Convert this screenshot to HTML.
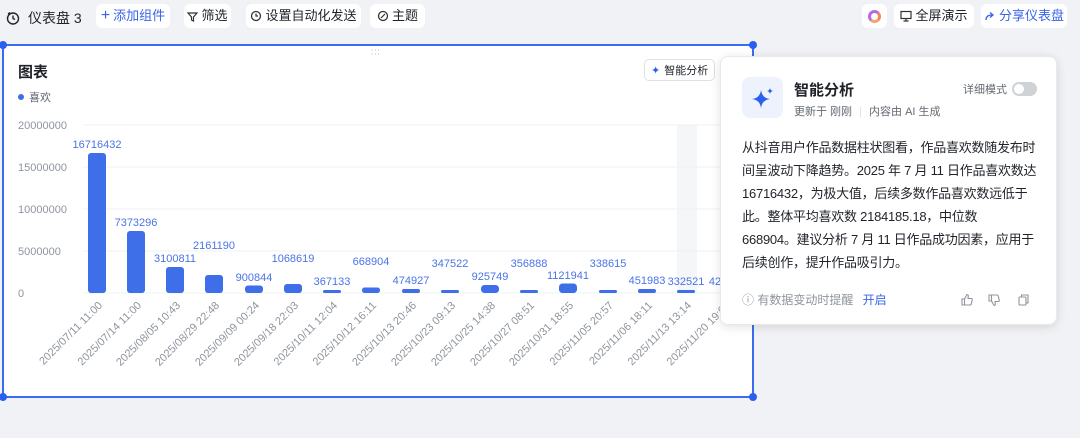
<!DOCTYPE html>
<html><head><meta charset="utf-8"><style>
*{margin:0;padding:0;box-sizing:border-box}
body{width:1080px;height:438px;background:#f1f2f5;font-family:"Liberation Sans","Noto Sans CJK SC",sans-serif;position:relative;overflow:hidden;color:#1f2329}
.btn{position:absolute;top:4px;height:24px;background:#fff;border-radius:6px;font-size:13px;line-height:24px;display:flex;align-items:center;justify-content:center;gap:3px;color:#1f2329;white-space:nowrap}
.blue{color:#3a64e6}
.card{position:absolute;left:2px;top:44px;width:752px;height:354px;background:#fff;border:2px solid #3a6cf0}
.dot{position:absolute;width:8px;height:8px;border-radius:50%;background:#2a5ff0}
.panel{position:absolute;left:720px;top:56px;width:337px;height:269px;background:#fff;border-radius:8px;box-shadow:0 2px 10px rgba(0,0,0,.12);border:1px solid #e8e9eb}
</style></head><body>
<div style="position:absolute;left:6px;top:8px;font-size:14px;display:flex;align-items:center;gap:8px">
<svg width="14" height="14" viewBox="0 0 14 14"><circle cx="7" cy="7.5" r="5.5" fill="none" stroke="#1f2329" stroke-width="1.4"/><path d="M7 4.5V7.5L9 8.5M4 1.5L2 3" stroke="#1f2329" stroke-width="1.4" fill="none"/></svg>
<span>仪表盘 3</span></div>
<div class="btn blue" style="left:96px;width:74px"><span style="font-size:16px">+</span>添加组件</div>
<div class="btn" style="left:184px;width:47px"><svg width="11" height="11"><path d="M1 2H10L6.5 6V10L4.5 9V6Z" fill="none" stroke="#333" stroke-width="1.2"/></svg>筛选</div>
<div class="btn" style="left:246px;width:115px"><svg width="12" height="12"><circle cx="6" cy="6" r="4.5" fill="none" stroke="#333" stroke-width="1.3"/><path d="M6 3.5V6H8" stroke="#333" fill="none" stroke-width="1.2"/></svg>设置自动化发送</div>
<div class="btn" style="left:370px;width:55px"><svg width="12" height="12"><circle cx="6" cy="6" r="4.5" fill="none" stroke="#333" stroke-width="1.3"/><path d="M4 8L8 4" stroke="#333" stroke-width="1.2"/></svg>主题</div>
<div class="btn" style="left:862px;width:25px"><div style="width:13px;height:13px;border-radius:50%;border:3px solid #b56ae8;border-right-color:#f08a5d;border-bottom-color:#f3a36b"></div></div>
<div class="btn" style="left:894px;width:80px"><svg width="12" height="12"><rect x="1" y="1.5" width="10" height="7" fill="none" stroke="#333" stroke-width="1.2"/><path d="M6 8.5V11M3.5 11H8.5" stroke="#333" stroke-width="1.2"/></svg>全屏演示</div>
<div class="btn blue" style="left:981px;width:86px"><svg width="12" height="12"><path d="M2 10Q2 5 8 5M6 2.5L9 5L6 7.5" fill="none" stroke="#3a64e6" stroke-width="1.3"/></svg>分享仪表盘</div>

<div class="card"></div>
<div class="dot" style="left:-1px;top:41px"></div><div class="dot" style="left:749px;top:41px"></div>
<div class="dot" style="left:-1px;top:393px"></div><div class="dot" style="left:749px;top:393px"></div>
<div style="position:absolute;left:371px;top:48px;font-size:8px;color:#999;letter-spacing:1px;line-height:4px">∙∙∙<br>∙∙∙</div>
<div style="position:absolute;left:18px;top:61px;font-size:15px;font-weight:bold">图表</div>
<div style="position:absolute;left:18px;top:89px;font-size:11px;color:#646a73;display:flex;align-items:center;gap:5px"><span style="width:6px;height:6px;border-radius:50%;background:#3e6ee8"></span>喜欢</div>
<div style="position:absolute;left:644px;top:59px;height:22px;border:1px solid #dee0e3;border-radius:5px;font-size:11px;padding:0 6px;display:flex;align-items:center;gap:4px;background:#fff"><span style="color:#2a5ff0">✦</span>智能分析</div>

<svg style="position:absolute;left:0;top:0" width="720" height="400" font-family="Liberation Sans,sans-serif" font-size="11">
<rect x="677" y="125" width="20" height="168" fill="#f5f6f7"/>
<g stroke="#eff0f1"><line x1="83" x2="720" y1="125" y2="125"/><line x1="83" x2="720" y1="167" y2="167"/><line x1="83" x2="720" y1="209" y2="209"/><line x1="83" x2="720" y1="251" y2="251"/><line x1="83" x2="720" y1="293" y2="293"/></g>
<g fill="#8f959e" font-size="11"><text x="18" y="129">20000000</text><text x="18" y="171">15000000</text><text x="18" y="213">10000000</text><text x="18" y="255">5000000</text><text x="18" y="297">0</text></g>
<g fill="#3e6ee8">
<rect x="88" y="153" width="18" height="140" rx="3"/>
<rect x="127" y="231" width="18" height="62" rx="3"/>
<rect x="166" y="267" width="18" height="26" rx="3"/>
<rect x="205" y="275" width="18" height="18" rx="3"/>
<rect x="245" y="285.5" width="18" height="7.5" rx="3"/>
<rect x="284" y="284" width="18" height="9" rx="3"/>
<rect x="323" y="290" width="18" height="3" rx="1.5"/>
<rect x="362" y="287.5" width="18" height="5.5" rx="2.5"/>
<rect x="402" y="289" width="18" height="4" rx="2"/>
<rect x="441" y="290" width="18" height="3" rx="1.5"/>
<rect x="481" y="285" width="18" height="8" rx="3.5"/>
<rect x="520" y="290" width="18" height="3" rx="1.5"/>
<rect x="559" y="283.5" width="18" height="9.5" rx="3.5"/>
<rect x="599" y="290" width="18" height="3" rx="1.5"/>
<rect x="638" y="289" width="18" height="4" rx="2"/>
<rect x="677" y="290" width="18" height="3" rx="1.5"/>
</g>
<g fill="#4a74e6" text-anchor="middle">
<text x="97" y="148">16716432</text><text x="136" y="226">7373296</text><text x="175" y="262">3100811</text><text x="214" y="249">2161190</text><text x="254" y="281">900844</text><text x="293" y="262">1068619</text><text x="332" y="285">367133</text><text x="371" y="265">668904</text><text x="411" y="284">474927</text><text x="450" y="267">347522</text><text x="490" y="280">925749</text><text x="529" y="267">356888</text><text x="568" y="279">1121941</text><text x="608" y="267">338615</text><text x="647" y="284">451983</text><text x="686" y="285">332521</text><text x="715" y="285">42</text>
</g>
<g fill="#8f959e" text-anchor="end">
<text transform="translate(103,306) rotate(-45)">2025/07/11 11:00</text>
<text transform="translate(142,306) rotate(-45)">2025/07/14 11:00</text>
<text transform="translate(181,306) rotate(-45)">2025/08/05 10:43</text>
<text transform="translate(220,306) rotate(-45)">2025/08/29 22:48</text>
<text transform="translate(260,306) rotate(-45)">2025/09/09 00:24</text>
<text transform="translate(299,306) rotate(-45)">2025/09/18 22:03</text>
<text transform="translate(338,306) rotate(-45)">2025/10/11 12:04</text>
<text transform="translate(377,306) rotate(-45)">2025/10/12 16:11</text>
<text transform="translate(417,306) rotate(-45)">2025/10/13 20:46</text>
<text transform="translate(456,306) rotate(-45)">2025/10/23 09:13</text>
<text transform="translate(496,306) rotate(-45)">2025/10/25 14:38</text>
<text transform="translate(535,306) rotate(-45)">2025/10/27 08:51</text>
<text transform="translate(574,306) rotate(-45)">2025/10/31 18:55</text>
<text transform="translate(614,306) rotate(-45)">2025/11/05 20:57</text>
<text transform="translate(653,306) rotate(-45)">2025/11/06 18:11</text>
<text transform="translate(692,306) rotate(-45)">2025/11/13 13:14</text>
<text transform="translate(731,306) rotate(-45)">2025/11/20 19:02</text>
</g>
</svg>

<div class="panel">
<div style="position:absolute;left:21px;top:20px;width:41px;height:41px;border-radius:8px;background:#eef2fd;display:flex;align-items:center;justify-content:center"><svg width="24" height="24" viewBox="0 0 24 24"><path d="M10 4Q11 12 19 13Q11 14 10 22Q9 14 1 13Q9 12 10 4Z" fill="#2a5ff0"/><path d="M19 2Q19.4 4.6 22 5Q19.4 5.4 19 8Q18.6 5.4 16 5Q18.6 4.6 19 2Z" fill="#2a5ff0"/></svg></div>
<div style="position:absolute;left:73px;top:22px;font-size:15px;font-weight:bold">智能分析</div>
<div style="position:absolute;left:73px;top:46px;font-size:11px;color:#646a73">更新于 刚刚 <span style="color:#dee0e3;margin:0 4px">|</span> 内容由 AI 生成</div>
<div style="position:absolute;left:242px;top:24px;font-size:11px;color:#646a73;display:flex;align-items:center;gap:5px">详细模式<span style="width:25px;height:14px;border-radius:7px;background:#d0d3d6;position:relative"><span style="position:absolute;left:2px;top:2px;width:10px;height:10px;border-radius:50%;background:#fff"></span></span></div>
<div style="position:absolute;left:21px;top:79px;width:296px;font-size:13px;line-height:23px;color:#1f2329;letter-spacing:-0.25px">从抖音用户作品数据柱状图看，作品喜欢数随发布时间呈波动下降趋势。2025 年 7 月 11 日作品喜欢数达<br>16716432，为极大值，后续多数作品喜欢数远低于此。整体平均喜欢数 2184185.18，中位数<br>668904。建议分析 7 月 11 日作品成功因素，应用于后续创作，提升作品吸引力。</div>
<div style="position:absolute;left:21px;top:234px;font-size:12px;color:#8f959e">ⓘ 有数据变动时提醒 <span style="color:#3a64e6;margin-left:6px">开启</span></div>
<svg style="position:absolute;left:240px;top:236px" width="70" height="14" fill="none" stroke="#8f959e" stroke-width="1.1">
<path d="M1 6H3.5V12H1ZM3.5 6L6 1.5Q7.5 1.5 7.3 3.5L7 5.5H10.5Q11.5 5.8 11.2 7L10.2 11Q10 12 9 12H3.5"/>
<path d="M28 8H30.5V2H28ZM30.5 8L33 12.5Q34.5 12.5 34.3 10.5L34 8.5H37.5Q38.5 8.2 38.2 7L37.2 3Q37 2 36 2H30.5"/>
<rect x="58" y="4" width="7" height="8" rx="1"/><path d="M60.5 4V2H67V10H65"/>
</svg>
</div>
</body></html>
